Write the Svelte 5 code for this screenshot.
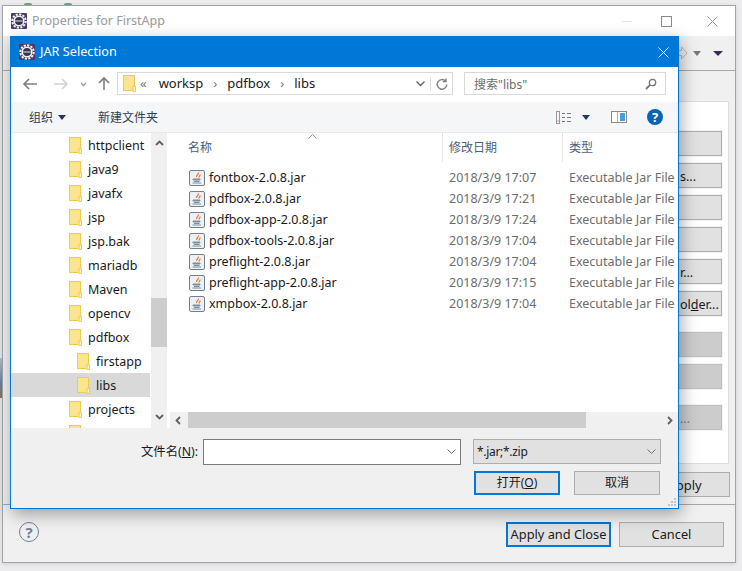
<script lang="ts">
	// only the ends of these labels stick out from under the dialog
	const sideButtons = ['', 's...', '', '', 'r...'];

	const folders = [
		{ name: 'httpclient', depth: 0 },
		{ name: 'java9', depth: 0 },
		{ name: 'javafx', depth: 0 },
		{ name: 'jsp', depth: 0 },
		{ name: 'jsp.bak', depth: 0 },
		{ name: 'mariadb', depth: 0 },
		{ name: 'Maven', depth: 0 },
		{ name: 'opencv', depth: 0 },
		{ name: 'pdfbox', depth: 0 },
		{ name: 'firstapp', depth: 1 },
		{ name: 'libs', depth: 1, selected: true },
		{ name: 'projects', depth: 0 },
		{ name: '', depth: 0 }
	];

	const files = [
		{ name: 'fontbox-2.0.8.jar', date: '2018/3/9 17:07' },
		{ name: 'pdfbox-2.0.8.jar', date: '2018/3/9 17:21' },
		{ name: 'pdfbox-app-2.0.8.jar', date: '2018/3/9 17:24' },
		{ name: 'pdfbox-tools-2.0.8.jar', date: '2018/3/9 17:04' },
		{ name: 'preflight-2.0.8.jar', date: '2018/3/9 17:04' },
		{ name: 'preflight-app-2.0.8.jar', date: '2018/3/9 17:15' },
		{ name: 'xmpbox-2.0.8.jar', date: '2018/3/9 17:04' }
	];
</script>

{#snippet folderIcon()}
	<svg class="folder" width="13" height="17" viewBox="0 0 13 17">
		<rect x="0.5" y="0.5" width="11" height="15" fill="#fde48f" stroke="#eccb54" />
		<path d="M10 16.5V11.5H12.5V16.5Z" fill="#fff3c4" stroke="#eccb54" />
	</svg>
{/snippet}

{#snippet eclipseIcon()}
	<svg class="eclipse" width="16" height="16" viewBox="0 0 16 16">
		<rect width="16" height="16" rx="1" fill="#4b3a6e" />
		<circle cx="8" cy="8" r="6.7" fill="none" stroke="#f4f4f4" stroke-width="2" stroke-dasharray="2.2 1.3" />
		<circle cx="8" cy="8" r="5.6" fill="#f4f4f4" />
		<circle cx="8" cy="8" r="4" fill="#37354e" />
		<rect x="4.2" y="7.4" width="7.6" height="1.2" fill="#c9c6d6" />
	</svg>
{/snippet}

{#snippet jarIcon()}
	<svg class="jar" width="16" height="16" viewBox="0 0 16 16">
		<rect x="0.5" y="0.5" width="15" height="15" rx="1.5" fill="#eef1f4" stroke="#71808f" />
		<path d="M9.5 2.5C10 4.5 7 5 7.5 7M11 4.5C11.5 5.8 9.8 6.2 10 7.5" fill="none" stroke="#e8762c" stroke-width="1.2" />
		<path d="M4 9H11V10H4ZM5 11.5H10.5M3.5 13H12" fill="#7a8ea3" stroke="#7a8ea3" />
	</svg>
{/snippet}

<div class="desktop">
	<span class="blip blip-a"></span>
	<span class="blip blip-b"></span>
	<span class="edge"></span>

	<section class="props">
		<header class="props-title">
			{@render eclipseIcon()}
			<span class="props-name">Properties for FirstApp</span>
			<span class="min"></span>
			<span class="max"></span>
			<svg class="props-close" width="11" height="11" viewBox="0 0 11 11">
				<path d="M0.5 0.5L10.5 10.5M10.5 0.5L0.5 10.5" stroke="#9a9a9a" />
			</svg>
		</header>
		<div class="props-tools">
			<svg width="12" height="14" viewBox="0 0 12 14">
				<path d="M1 4.5H5.5V1L11 7L5.5 13V9.5H1Z" fill="none" stroke="#bdbdbd" />
			</svg>
			<i class="drop grey"></i>
			<i class="drop purple"></i>
		</div>
		<div class="props-body">
			<div class="panel">
				{#each sideButtons as label}
					<button class="side-btn">{label}</button>
				{/each}
				<button class="side-btn">ol<u>d</u>er...</button>
				<button class="side-btn off first-off"></button>
				<button class="side-btn off"></button>
				<button class="side-btn off last-off">...</button>
			</div>
			<button class="apply">Apply</button>
		</div>
		<footer class="props-foot">
			<span class="hint">?</span>
			<button class="foot-btn primary">Apply and Close</button>
			<button class="foot-btn">Cancel</button>
		</footer>
	</section>

	<section class="dialog">
		<header class="dlg-title">
			{@render eclipseIcon()}
			<span class="dlg-name">JAR Selection</span>
			<svg class="dlg-close" width="11" height="11" viewBox="0 0 11 11">
				<path d="M0.5 0.5L10.5 10.5M10.5 0.5L0.5 10.5" stroke="#fff" />
			</svg>
		</header>

		<div class="address">
			<svg class="nav" width="106" height="22" viewBox="0 0 106 22">
				<path d="M13 12H26M18 7L13 12L18 17" fill="none" stroke="#7d7d7d" stroke-width="1.6" />
				<path d="M43 12H56M51 7L56 12L51 17" fill="none" stroke="#d0d0d0" stroke-width="1.6" />
				<path d="M70 11L72.5 13.5L75 11" fill="none" stroke="#9a9a9a" stroke-width="1.3" />
				<path d="M93 18V6M88 11L93 6L98 11" fill="none" stroke="#7d7d7d" stroke-width="1.6" />
			</svg>
			<div class="crumbs">
				{@render folderIcon()}
				<span class="sep first">«</span>
				<span>worksp</span>
				<span class="sep">›</span>
				<span>pdfbox</span>
				<span class="sep">›</span>
				<span>libs</span>
				<svg class="chev" width="9" height="6" viewBox="0 0 9 6">
					<path d="M0.5 0.5L4.5 4.5L8.5 0.5" fill="none" stroke="#666" stroke-width="1.4" />
				</svg>
				<svg class="refresh" width="12" height="12" viewBox="0 0 12 12">
					<path d="M9.6 3.2A4.8 4.8 0 1 0 10.8 6.5M10 0.5V3.6H6.8" fill="none" stroke="#808080" stroke-width="1.4" />
				</svg>
			</div>
			<div class="search">
				<span>搜索"libs"</span>
				<svg width="12" height="12" viewBox="0 0 12 12">
					<circle cx="7.5" cy="4.5" r="3.2" fill="none" stroke="#777" stroke-width="1.3" />
					<path d="M5 7L1 11" stroke="#777" stroke-width="1.8" />
				</svg>
			</div>
		</div>

		<div class="toolbar">
			<span class="organize">组织</span>
			<i class="drop navy"></i>
			<span class="newdir">新建文件夹</span>
			<svg class="views" width="16" height="13" viewBox="0 0 16 13">
				<rect x="0.5" y="0.5" width="3" height="12" fill="none" stroke="#999" />
				<path d="M6 2.5H9M11 2.5H15M6 6.5H9M11 6.5H15M6 10.5H9M11 10.5H15" stroke="#777" />
				<rect x="1.5" y="9.5" width="1" height="1" fill="#d33" />
			</svg>
			<i class="drop navy small"></i>
			<svg class="pane" width="16" height="12" viewBox="0 0 16 12">
				<rect x="0.5" y="0.5" width="15" height="11" fill="#fff" stroke="#8a8a8a" />
				<rect x="9" y="2" width="5" height="8" fill="#4b9be0" />
				<path d="M6.5 1V11" stroke="#b0b0b0" />
			</svg>
			<span class="help">?</span>
		</div>

		<div class="main">
			<nav class="tree">
				{#each folders as f}
					<div class="tree-row" class:selected={f.selected} class:child={f.depth === 1}>
						{@render folderIcon()}
						<span>{f.name}</span>
					</div>
				{/each}
			</nav>
			<div class="vscroll">
				<svg class="arrow" width="9" height="6" viewBox="0 0 9 6">
					<path d="M1 5L4.5 1.5L8 5" fill="none" stroke="#606060" stroke-width="1.8" />
				</svg>
				<div class="vthumb"></div>
				<svg class="arrow down" width="9" height="6" viewBox="0 0 9 6">
					<path d="M1 1L4.5 4.5L8 1" fill="none" stroke="#606060" stroke-width="1.8" />
				</svg>
			</div>
			<div class="list">
				<div class="list-head">
					<span class="col-name">名称</span>
					<span class="col-date">修改日期</span>
					<span class="col-type">类型</span>
					<svg class="sort" width="9" height="5" viewBox="0 0 9 5">
						<path d="M0.5 4.5L4.5 0.5L8.5 4.5" fill="none" stroke="#9a9a9a" />
					</svg>
				</div>
				<div class="rows">
					{#each files as file}
						<div class="row">
							{@render jarIcon()}
							<span class="file">{file.name}</span>
							<span class="muted">{file.date}</span>
							<span class="muted">Executable Jar File</span>
						</div>
					{/each}
				</div>
				<div class="hscroll">
					<svg width="6" height="9" viewBox="0 0 6 9">
						<path d="M5 1L1.5 4.5L5 8" fill="none" stroke="#606060" stroke-width="1.8" />
					</svg>
					<div class="hthumb"></div>
					<svg width="6" height="9" viewBox="0 0 6 9">
						<path d="M1 1L4.5 4.5L1 8" fill="none" stroke="#606060" stroke-width="1.8" />
					</svg>
				</div>
			</div>
		</div>

		<div class="bottom">
			<div class="name-row">
				<label class="name-label" for="fname">文件名(<u>N</u>):</label>
				<div class="name-input">
					<input id="fname" type="text" />
					<svg width="9" height="6" viewBox="0 0 9 6">
						<path d="M0.5 0.5L4.5 4.5L8.5 0.5" fill="none" stroke="#707070" />
					</svg>
				</div>
				<div class="combo">
					<span>*.jar;*.zip</span>
					<svg width="9" height="6" viewBox="0 0 9 6">
						<path d="M0.5 0.5L4.5 4.5L8.5 0.5" fill="none" stroke="#707070" />
					</svg>
				</div>
			</div>
			<div class="action-row">
				<button class="dlg-btn primary">打开(<u>O</u>)</button>
				<button class="dlg-btn">取消</button>
			</div>
			<svg class="grip" width="9" height="9" viewBox="0 0 9 9">
				<path d="M6 0h2v2H6zM3 3h2v2H3zM6 3h2v2H6zM0 6h2v2H0zM3 6h2v2H3zM6 6h2v2H6z" fill="#c4c4c4" />
			</svg>
		</div>
	</section>
</div>

<style>
	:global(body) {
		margin: 0;
		overflow: hidden;
	}

	.desktop {
		position: relative;
		width: 742px;
		height: 571px;
		overflow: hidden;
		background: #ececee;
		font-family: 'Noto Sans', 'Noto Sans CJK SC', sans-serif;
		font-size: 12.5px;
		color: #1a1a1a;
	}

	button {
		font: inherit;
		color: inherit;
		padding: 0;
	}

	u {
		text-underline-offset: 1px;
	}

	.blip {
		position: absolute;
		top: 3px;
		width: 8px;
		height: 2px;
		border-radius: 4px 4px 0 0;
		background: #6fa77c;
	}

	.blip-a {
		left: 24px;
	}

	.blip-b {
		left: 64px;
	}

	.edge {
		position: absolute;
		left: 0;
		top: 358px;
		width: 2px;
		height: 40px;
		background: linear-gradient(#b9c3d3, #6d86a8 60%, #8a7a60);
	}

	/* window behind */
	.props {
		position: absolute;
		left: 2px;
		top: 5px;
		width: 734px;
		height: 558px;
		box-sizing: border-box;
		display: flex;
		flex-direction: column;
		background: #f0f0f0;
		border: 1px solid #a3a3a3;
		box-shadow: 0 1px 4px rgba(0, 0, 0, 0.12);
	}

	.props-title {
		flex: 0 0 30px;
		box-sizing: border-box;
		display: flex;
		align-items: center;
		padding-left: 8px;
		background: #fff;
	}

	.props-name {
		margin-left: 5px;
		margin-bottom: 2px;
		color: #9a9a9a;
		font-size: 12.5px;
	}

	.min {
		width: 10px;
		height: 1px;
		margin-left: auto;
		background: #e4e4e4;
	}

	.max {
		width: 9px;
		height: 9px;
		margin-left: 29px;
		border: 1px solid #8a8a8a;
	}

	.props-close {
		margin-left: 35px;
		margin-right: 17px;
	}

	.props-tools {
		flex: 0 0 35px;
		box-sizing: border-box;
		display: flex;
		align-items: center;
		justify-content: flex-end;
		padding-right: 12px;
		background: #f0f0f0;
		border-bottom: 1px solid #a8a8a8;
	}

	.props-tools .grey {
		margin-left: 5px;
		border-top-color: #777;
	}

	.props-tools .purple {
		margin-left: 12px;
		border-left-width: 5px;
		border-right-width: 5px;
		border-top-color: #3a2a5c;
	}

	.drop {
		display: inline-block;
		width: 0;
		height: 0;
		border-left: 4px solid transparent;
		border-right: 4px solid transparent;
		border-top: 5px solid #1f3a5f;
	}

	.props-body {
		flex: 1;
		display: flex;
		flex-direction: column;
		align-items: flex-end;
		min-height: 0;
		border-bottom: 1px solid #a8a8a8;
	}

	.panel {
		box-sizing: border-box;
		width: 640px;
		height: 363px;
		margin-top: 30px;
		margin-right: 6px;
		padding: 29px 6px 0 0;
		display: flex;
		flex-direction: column;
		align-items: flex-end;
		gap: 7px;
		background: #fff;
		border: 1px solid #dcdcdc;
	}

	.side-btn {
		width: 150px;
		height: 25px;
		box-sizing: border-box;
		flex: none;
		padding: 1px 0 0 107px;
		background: #e1e1e1;
		border: 1px solid #adadad;
		box-shadow: 0 0 0 1px #f4f4f4;
		font-size: 12.5px;
		text-align: left;
		white-space: nowrap;
	}

	.side-btn.off {
		background: #cccccc;
		border-color: #bfbfbf;
		color: #7a7a7a;
	}

	.first-off {
		margin-top: 9px;
	}

	.last-off {
		margin-top: 9px;
	}

	.apply {
		width: 96px;
		height: 25px;
		margin: 8px 5px 0 0;
		padding: 0 0 0 5px;
		background: #e1e1e1;
		border: 1px solid #adadad;
		font-size: 13px;
	}

	.props-foot {
		flex: 0 0 57px;
		box-sizing: border-box;
		display: flex;
		align-items: flex-start;
		padding: 17px 11px 0 16px;
		gap: 8px;
	}

	.hint {
		width: 18px;
		height: 18px;
		margin-right: auto;
		border: 1.5px solid #6f7f9c;
		border-radius: 50%;
		color: #6f7f9c;
		font-size: 15px;
		font-weight: 700;
		line-height: 18px;
		text-align: center;
	}

	.foot-btn {
		width: 105px;
		height: 25px;
		box-sizing: border-box;
		padding-bottom: 2px;
		background: #e1e1e1;
		border: 1px solid #adadad;
		font-size: 12.8px;
	}

	.primary {
		border: 2px solid #0078d7;
	}

	/* file dialog */
	.dialog {
		position: absolute;
		left: 10px;
		top: 36px;
		width: 669px;
		height: 473px;
		box-sizing: border-box;
		display: flex;
		flex-direction: column;
		background: #f0f0f0;
		border: 1px solid #0078d7;
		box-shadow: 2px 5px 16px rgba(0, 0, 0, 0.35);
	}

	.dlg-title {
		flex: 0 0 30px;
		display: flex;
		align-items: center;
		padding-left: 8px;
		background: #0078d7;
		color: #fff;
	}

	.dlg-name {
		margin-left: 5px;
		margin-bottom: 2px;
		font-size: 12.7px;
	}

	.dlg-close {
		margin-left: auto;
		margin-right: 9px;
	}

	.address {
		flex: 0 0 35px;
		box-sizing: border-box;
		display: flex;
		align-items: flex-start;
		padding-top: 5px;
		background: #fff;
		font-size: 13px;
	}

	.nav {
		flex: none;
	}

	.crumbs {
		box-sizing: border-box;
		width: 336px;
		height: 23px;
		display: flex;
		align-items: center;
		padding-left: 5px;
		border: 1px solid #d9d9d9;
	}

	.crumbs > span {
		margin-right: 10px;
		margin-bottom: 2px;
	}

	.crumbs > span.sep {
		margin-right: 10px;
		color: #777;
	}

	.crumbs > span.first {
		margin-left: 4px;
		margin-right: 12px;
	}

	.chev {
		margin-left: auto;
		margin-right: 5px;
	}

	.refresh {
		box-sizing: content-box;
		padding: 0 4px 0 5px;
		height: 12px;
		border-left: 1px solid #d9d9d9;
	}

	.search {
		box-sizing: border-box;
		width: 202px;
		height: 23px;
		margin-left: 11px;
		display: flex;
		align-items: center;
		justify-content: space-between;
		padding: 0 8px 0 9px;
		border: 1px solid #d9d9d9;
		color: #6d6d6d;
		font-size: 12px;
	}

	.toolbar {
		flex: 0 0 31px;
		box-sizing: border-box;
		display: flex;
		align-items: center;
		padding-left: 18px;
		background: #f5f6f7;
		border-bottom: 1px solid #e8e8e8;
		color: #2f3f55;
		font-size: 12px;
	}

	.organize {
		margin-right: 5px;
		margin-bottom: 1px;
	}

	.newdir {
		margin-left: 32px;
		margin-bottom: 1px;
	}

	.views {
		margin-left: auto;
	}

	.small {
		margin-left: 10px;
	}

	.pane {
		margin-left: 21px;
	}

	.help {
		width: 16px;
		height: 16px;
		margin-left: 20px;
		margin-right: 15px;
		border-radius: 50%;
		background: #0a64b4;
		color: #fff;
		font-size: 13px;
		font-weight: 700;
		line-height: 16px;
		text-align: center;
	}

	.main {
		flex: 0 0 295px;
		display: flex;
		min-height: 0;
		background: #fff;
	}

	.tree {
		flex: 0 0 140px;
		height: 295px;
		overflow: hidden;
	}

	.tree-row {
		height: 24px;
		display: flex;
		align-items: center;
		gap: 6px;
		padding-left: 58px;
	}

	.tree-row.child {
		padding-left: 66px;
	}

	.tree-row.selected {
		margin-right: 1px;
		background: #d9d9d9;
	}

	.folder {
		flex: none;
		overflow: visible;
	}

	.vscroll {
		flex: 0 0 16px;
		display: flex;
		flex-direction: column;
		align-items: center;
		background: #f0f0f0;
		margin-right: 3px;
	}

	.arrow {
		flex: none;
		margin-top: 7px;
	}

	.arrow.down {
		margin-top: auto;
		margin-bottom: 8px;
	}

	.vthumb {
		width: 16px;
		height: 49px;
		margin-top: 152px;
		background: #cdcdcd;
	}

	.list {
		flex: 1;
		min-width: 0;
		display: flex;
		flex-direction: column;
	}

	.list-head {
		position: relative;
		display: flex;
		flex: 0 0 28px;
		line-height: 29px;
		color: #4c607a;
		font-size: 12px;
	}

	.col-name {
		width: 254px;
		padding-left: 18px;
		border-right: 1px solid #e5e5e5;
	}

	.col-date {
		width: 113px;
		padding-left: 6px;
		border-right: 1px solid #e5e5e5;
	}

	.col-type {
		padding-left: 6px;
	}

	.sort {
		position: absolute;
		left: 138px;
		top: 1px;
	}

	.rows {
		padding-top: 5px;
	}

	.row {
		height: 21px;
		display: grid;
		grid-template-columns: 16px 244px 120px 1fr;
		align-items: center;
		padding-left: 19px;
		white-space: nowrap;
	}

	.file {
		padding-left: 4px;
	}

	.muted {
		color: #6d6d6d;
	}

	.hscroll {
		flex: 0 0 16px;
		margin-top: auto;
		display: flex;
		align-items: center;
		padding: 0 5px;
		background: #f0f0f0;
	}

	.hthumb {
		width: 398px;
		height: 16px;
		margin-left: 7px;
		margin-right: auto;
		background: #cdcdcd;
	}

	.bottom {
		position: relative;
		flex: 1;
		background: #f0f0f0;
	}

	.name-row {
		display: flex;
		align-items: flex-start;
		margin-top: 11px;
	}

	.name-label {
		width: 187px;
		font-size: 12.3px;
		line-height: 26px;
		text-align: right;
	}

	.name-input {
		box-sizing: border-box;
		width: 258px;
		height: 26px;
		margin-left: 5px;
		display: flex;
		align-items: center;
		padding-right: 4px;
		background: #fff;
		border: 1px solid #7a7a7a;
	}

	.name-input input {
		flex: 1;
		min-width: 0;
		border: 0;
		outline: 0;
		background: none;
	}

	.combo {
		box-sizing: border-box;
		width: 188px;
		height: 25px;
		margin-left: 12px;
		display: flex;
		align-items: center;
		justify-content: space-between;
		padding: 0 4px 0 3px;
		background: #e1e1e1;
		border: 1px solid #adadad;
		font-size: 12px;
		letter-spacing: -0.3px;
	}

	.action-row {
		display: flex;
		justify-content: flex-end;
		gap: 14px;
		margin-top: 6px;
		padding-right: 18px;
	}

	.dlg-btn {
		box-sizing: border-box;
		width: 86px;
		height: 24px;
		padding-bottom: 2px;
		background: #e1e1e1;
		border: 1px solid #adadad;
		font-size: 12px;
	}

	.dlg-btn.primary {
		border: 2px solid #0078d7;
	}

	.grip {
		position: absolute;
		right: 1px;
		bottom: 1px;
	}
</style>
